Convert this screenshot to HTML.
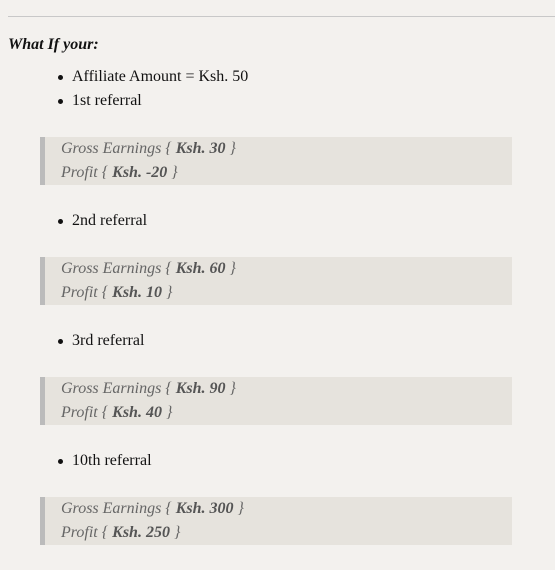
<!DOCTYPE html>
<html><head><style>
html,body{margin:0;padding:0;background:#f3f1ee;width:555px;height:570px;overflow:hidden}
body{font-family:"Liberation Serif",serif;font-size:16px;color:#111;position:relative}
.hr{position:absolute;left:8px;right:0;top:16px;height:1px;background:#c8c8c8}
.h{position:absolute;left:8px;top:35px;font-weight:bold;font-style:italic;line-height:20px}
.li{position:absolute;left:72px;line-height:20px}
.li:before{content:"";position:absolute;left:-14px;top:8px;width:5px;height:5px;border-radius:50%;background:#111}
.bq{position:absolute;left:40px;width:467px;height:48px;background:#e6e3dd;border-left:5px solid #bbb;color:#666;font-style:italic;line-height:24px}
.bq div{padding-left:16px}
b{font-weight:bold;color:#555}
</style></head><body>
<div class="hr"></div>
<div class="h">What If your:</div>
<div class="li" style="top:67px">Affiliate Amount = Ksh. 50</div>
<div class="li" style="top:91px">1st referral</div>
<div class="bq" style="top:137px"><div>Gross Earnings { <b>Ksh. 30</b> }</div><div>Profit { <b>Ksh. -20</b> }</div></div>
<div class="li" style="top:211px">2nd referral</div>
<div class="bq" style="top:257px"><div>Gross Earnings { <b>Ksh. 60</b> }</div><div>Profit { <b>Ksh. 10</b> }</div></div>
<div class="li" style="top:331px">3rd referral</div>
<div class="bq" style="top:377px"><div>Gross Earnings { <b>Ksh. 90</b> }</div><div>Profit { <b>Ksh. 40</b> }</div></div>
<div class="li" style="top:451px">10th referral</div>
<div class="bq" style="top:497px"><div>Gross Earnings { <b>Ksh. 300</b> }</div><div>Profit { <b>Ksh. 250</b> }</div></div>
</body></html>
